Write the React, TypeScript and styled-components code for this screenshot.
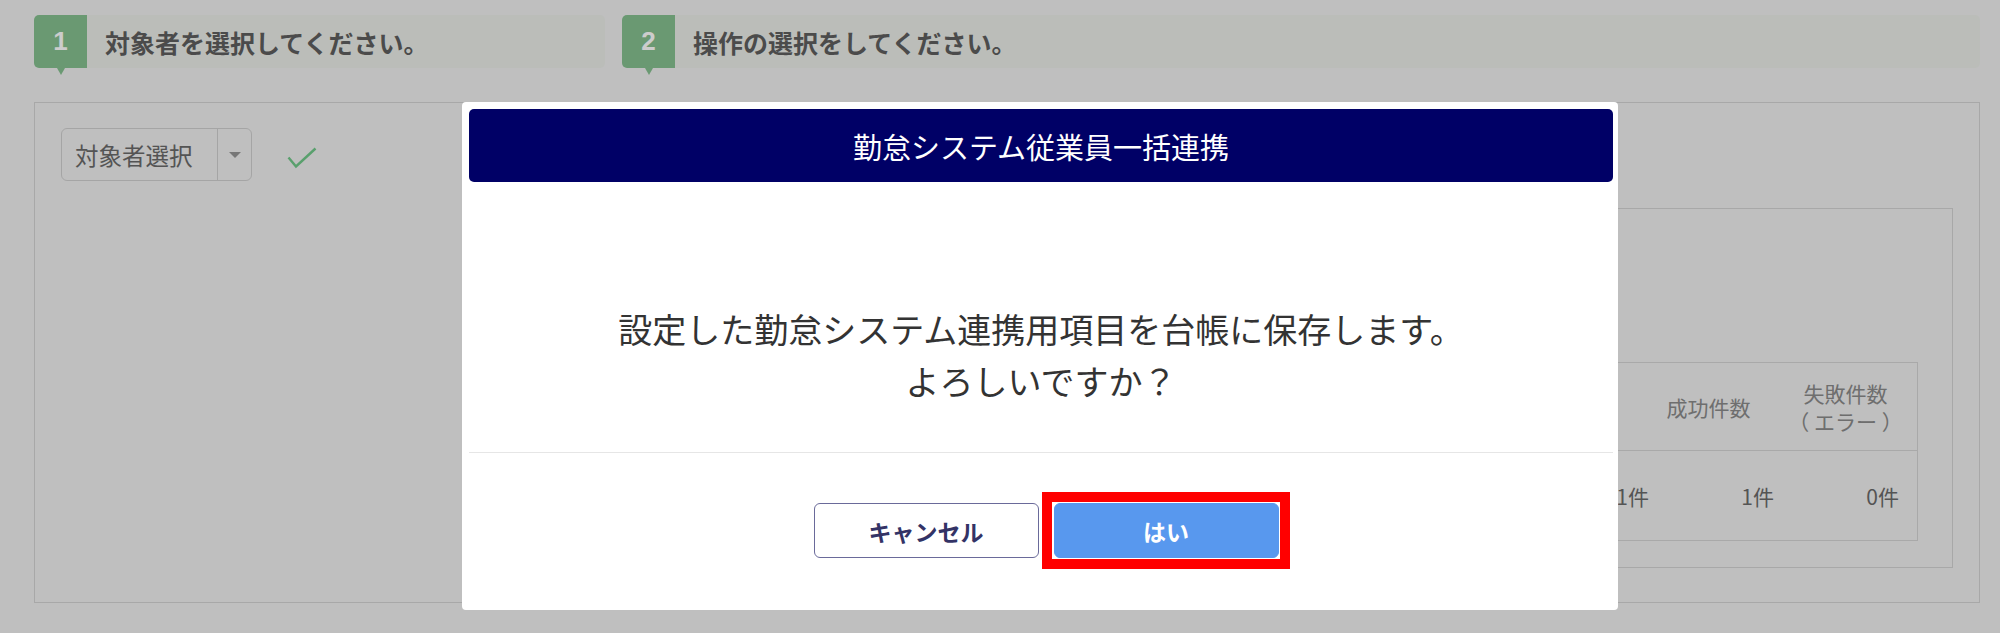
import React from "react";
import styled, { createGlobalStyle } from "styled-components";

const GlobalStyle = createGlobalStyle`
	html, body {
		margin: 0;
		padding: 0;
		background: #efefef;
	}
	body {
		font-family: "Noto Sans CJK JP", "Noto Sans", sans-serif;
	}
	* {
		box-sizing: border-box;
	}
`;

type Step = { no: number; label: string };

const steps: Step[] = [
	{ no: 1, label: "対象者を選択してください。" },
	{ no: 2, label: "操作の選択をしてください。" },
];

const columns = [
	{ head: ["対象件数"], value: "1件", padRight: 62 },
	{ head: ["成功件数"], value: "1件", padRight: 42 },
	{ head: ["失敗件数", "（ エラー ）"], value: "0件", padRight: 18 },
];

const App: React.FC = () => {
	return (
		<>
			<GlobalStyle />
			<Page>
				<StepRow>
					{steps.map(({ no, label }) => (
						<StepBox key={no}>
							<Badge>{no}</Badge>
							<StepLabel>{label}</StepLabel>
						</StepBox>
					))}
				</StepRow>

				<Panel>
					<SelectRow>
						<Select>
							<SelectText>対象者選択</SelectText>
							<SelectArrow>
								<span />
							</SelectArrow>
						</Select>
						<svg width='30' height='22' viewBox='0 0 30 22'>
							<path
								d='M1.5 10.5 L9 19.5 L28.5 1.5'
								fill='none'
								stroke='#70c889'
								strokeWidth='2.4'
							/>
						</svg>
					</SelectRow>

					<InnerBox>
						<Table>
							{columns.map(({ head, padRight }) => (
								<HeadCell key={head[0]} $padRight={padRight}>
									{head.map((h) => (
										<span key={h}>{h}</span>
									))}
								</HeadCell>
							))}
							{columns.map(({ head, value }) => (
								<DataCell key={head[0] + value}>{value}</DataCell>
							))}
						</Table>
					</InnerBox>
				</Panel>
			</Page>

			<Overlay />

			<Modal>
				<TitleBar>勤怠システム従業員一括連携</TitleBar>
				<Body>
					設定した勤怠システム連携用項目を台帳に保存します。
					<br />
					よろしいですか？
				</Body>
				<Footer>
					<Button>キャンセル</Button>
					<Button $primary $marked>
						はい
					</Button>
				</Footer>
			</Modal>
		</>
	);
};

export default App;

const Page = styled.div`
	width: 2000px;
	height: 633px;
	padding: 15px 20px 0 34px;
	overflow: hidden;
`;

const StepRow = styled.div`
	display: grid;
	grid-template-columns: 571px 1fr;
	gap: 17px;
	margin-bottom: 34px;
`;

const StepBox = styled.div`
	display: flex;
	height: 53px;
`;

const Badge = styled.div`
	position: relative;
	width: 53px;
	display: flex;
	align-items: center;
	justify-content: center;
	background: #85c08f;
	border-radius: 5px 0 0 5px;
	color: #ffffff;
	font-family: "Liberation Sans", Arial, sans-serif;
	font-weight: 700;
	font-size: 26px;

	&::after {
		content: "";
		position: absolute;
		left: 50%;
		bottom: -7px;
		margin-left: -4px;
		border-left: 4px solid transparent;
		border-right: 4px solid transparent;
		border-top: 7px solid #85c08f;
	}
`;

const StepLabel = styled.div`
	flex: 1;
	display: flex;
	align-items: center;
	padding-left: 18px;
	background: #eaede8;
	border-radius: 0 5px 5px 0;
	color: #5e5e5e;
	font-size: 25px;
	font-weight: 700;
`;

const Panel = styled.div`
	display: flex;
	justify-content: space-between;
	align-items: flex-start;
	border: 1px solid #d2d2d2;
	padding: 25px 26px 34px 26px;
`;

const SelectRow = styled.div`
	display: flex;
	align-items: center;
	gap: 35px;

	> svg {
		margin-top: 6px;
	}
`;

const Select = styled.div`
	display: flex;
	width: 191px;
	height: 53px;
	border: 1px solid #cfcfcf;
	border-radius: 6px;
`;

const SelectText = styled.div`
	flex: 1;
	display: flex;
	align-items: center;
	padding-left: 13px;
	color: #6a6a6a;
	font-size: 23.5px;
`;

const SelectArrow = styled.div`
	width: 34px;
	display: flex;
	align-items: center;
	justify-content: center;
	border-left: 1px solid #cfcfcf;

	> span {
		border-left: 6px solid transparent;
		border-right: 6px solid transparent;
		border-top: 6px solid #959595;
	}
`;

const InnerBox = styled.div`
	width: 1060px;
	height: 360px;
	margin-top: 80px;
	display: flex;
	justify-content: flex-end;
	border: 1px solid #d2d2d2;
	padding: 153px 34px 26px 0;
`;

const Table = styled.div`
	display: grid;
	grid-template-columns: repeat(3, 125px);
	height: 179px;
	border: 1px solid #d4d4d4;
`;

const HeadCell = styled.div<{ $padRight: number }>`
	height: 88px;
	display: flex;
	flex-direction: column;
	align-items: center;
	justify-content: center;
	padding-right: ${(p) => p.$padRight}px;
	border-bottom: 1px solid #d4d4d4;
	color: #8a8a8a;
	font-size: 21px;
	line-height: 28px;
	white-space: pre;
`;

const DataCell = styled.div`
	height: 88px;
	display: flex;
	align-items: center;
	justify-content: flex-end;
	padding-right: 18px;
	color: #6a6a6a;
	font-size: 21px;
`;

const Overlay = styled.div`
	position: fixed;
	inset: 0;
	background: rgba(0, 0, 0, 0.2);
`;

const Modal = styled.div`
	position: fixed;
	top: 102px;
	left: 462px;
	width: 1156px;
	height: 508px;
	display: flex;
	flex-direction: column;
	padding: 7px 5px 0 7px;
	background: #ffffff;
	border-radius: 4px;
`;

const TitleBar = styled.div`
	height: 73px;
	display: flex;
	align-items: center;
	justify-content: center;
	background: #000066;
	border-radius: 5px;
	color: #ffffff;
	font-size: 29px;
`;

const Body = styled.div`
	padding: 121px 0 45px;
	border-bottom: 1px solid #e6e6e6;
	text-align: center;
	color: #333333;
	font-size: 34px;
	line-height: 52px;
`;

const Footer = styled.div`
	display: flex;
	justify-content: center;
	gap: 15px;
	padding: 50px 0 0 10px;
`;

const Button = styled.button<{ $primary?: boolean; $marked?: boolean }>`
	position: relative;
	width: 225px;
	height: 55px;
	border-radius: 6px;
	font-family: "Noto Sans CJK JP", "Noto Sans", sans-serif;
	font-size: 23px;
	font-weight: 700;
	cursor: pointer;
	border: 1px solid ${(p) => (p.$primary ? "#5898ee" : "#6a6a9a")};
	background: ${(p) => (p.$primary ? "#5898ee" : "#ffffff")};
	color: ${(p) => (p.$primary ? "#ffffff" : "#333366")};

	&::after {
		content: "";
		display: ${(p) => (p.$marked ? "block" : "none")};
		position: absolute;
		inset: -12px -12px -12px -13px;
		border: 10px solid #ff0000;
		pointer-events: none;
	}
`;
